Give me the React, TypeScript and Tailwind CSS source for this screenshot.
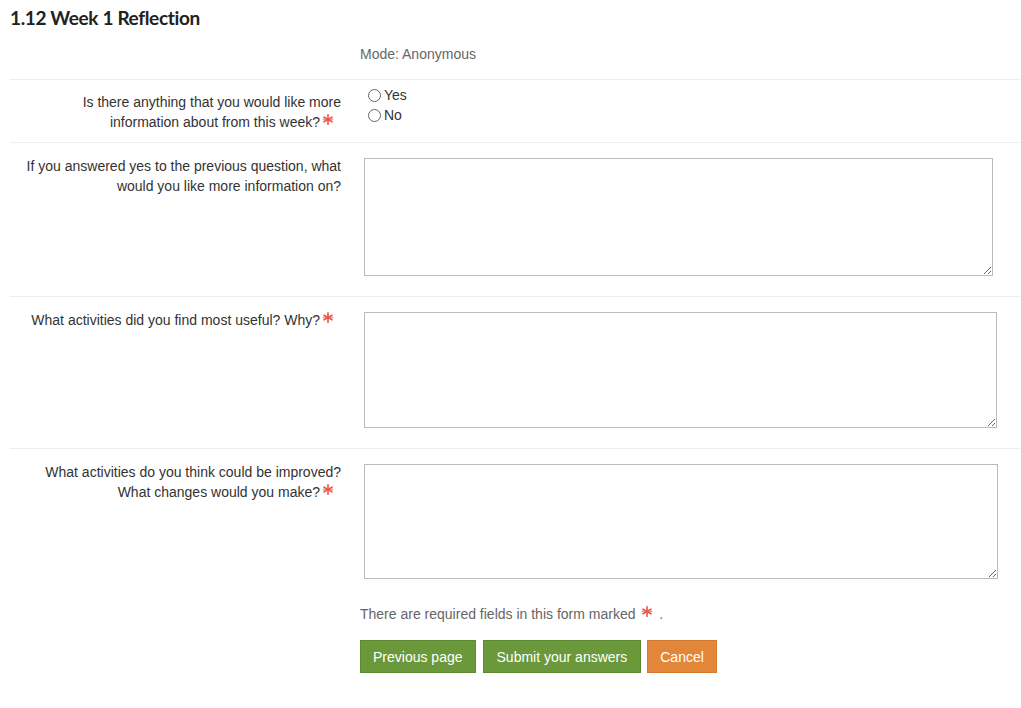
import React from 'react'

function Req({ className = '' }: { className?: string }) {
  return (
    <svg width="14" height="13" viewBox="0 0 14 14" className={`inline-block align-top mt-[1px] ${className}`}>
      <g stroke="#ea5a4c" strokeWidth="1.8" strokeLinecap="round">
        <line x1="7" y1="2" x2="7" y2="12" />
        <line x1="2.7" y1="4.5" x2="11.3" y2="9.5" />
        <line x1="2.7" y1="9.5" x2="11.3" y2="4.5" />
        <line x1="2" y1="7" x2="12" y2="7" opacity="0.6" />
      </g>
    </svg>
  )
}

function Radio({ label }: { label: string }) {
  return (
    <label className="flex items-center gap-[3px] h-[20px]">
      <input type="radio" name="more-info" className="appearance-none w-[13px] h-[13px] rounded-full border border-[#666] bg-white m-0" />
      <span>{label}</span>
    </label>
  )
}

function Row({ children, label, required, pt, pb }: { children: React.ReactNode; label: React.ReactNode; required?: boolean; pt: string; pb: string }) {
  return (
    <div className={`flex border-t border-[#eeeeee] ${pb}`}>
      <div className={`w-[331px] shrink-0 text-right ${pt}`}>
        {label}
        {required && <Req className="ml-[1px] mr-[6px]" />}
      </div>
      {children}
    </div>
  )
}

export default function App() {
  return (
    <div className="min-h-[708px] bg-white text-[14px] leading-[20px] text-[#333] font-['Liberation_Sans',Arial,sans-serif]">
      <div className="pl-[10px] pt-[6px]">
        <h2 className="text-[19px] leading-[24px] font-bold text-[#222] font-['Lato','Open_Sans',sans-serif] tracking-[-0.35px]">
          1.12 Week 1 Reflection
        </h2>
        <div className="pl-[350px] pt-[14px] pb-[15px] text-[#666]">Mode: Anonymous</div>

        <Row pt="pt-[12px]" pb="pb-[10px]" label={<>Is there anything that you would like more<br />information about from this week?</>} required>
          <div className="pl-[27px] pt-[5px]">
            <Radio label="Yes" />
            <Radio label="No" />
          </div>
        </Row>

        <Row pt="pt-[13px]" pb="pb-[20px]" label={<>If you answered yes to the previous question, what<br />would you like more information on?</>}>
          <div className="pl-[23px] pt-[15px]">
            <textarea className="block w-[629px] h-[118px] border border-[#bbb] resize-y" />
          </div>
        </Row>

        <Row pt="pt-[13px]" pb="pb-[20px]" label={<>What activities did you find most useful? Why?</>} required>
          <div className="pl-[23px] pt-[15px]">
            <textarea className="block w-[633px] h-[116px] border border-[#bbb] resize-y" />
          </div>
        </Row>

        <Row pt="pt-[13px]" pb="pb-[15px]" label={<>What activities do you think could be improved?<br />What changes would you make?</>} required>
          <div className="pl-[23px] pt-[15px]">
            <textarea className="block w-[634px] h-[115px] border border-[#bbb] resize-y" />
          </div>
        </Row>

        <div className="pl-[350px] text-[#666] pt-[10px]">
          There are required fields in this form marked <Req className="mx-[1px]" /> .
        </div>

        <div className="pl-[350px] pt-[16px] flex gap-[7px]">
          <button className="h-[33px] px-[12px] bg-[#6a983b] text-white border border-[#5d8a31]">Previous page</button>
          <button className="h-[33px] px-[13px] bg-[#6a983b] text-white border border-[#5d8a31]">Submit your answers</button>
          <button className="h-[33px] px-[12px] bg-[#e2873a] text-white border border-[#d47a2e] -ml-[1px]">Cancel</button>
        </div>
      </div>
    </div>
  )
}
